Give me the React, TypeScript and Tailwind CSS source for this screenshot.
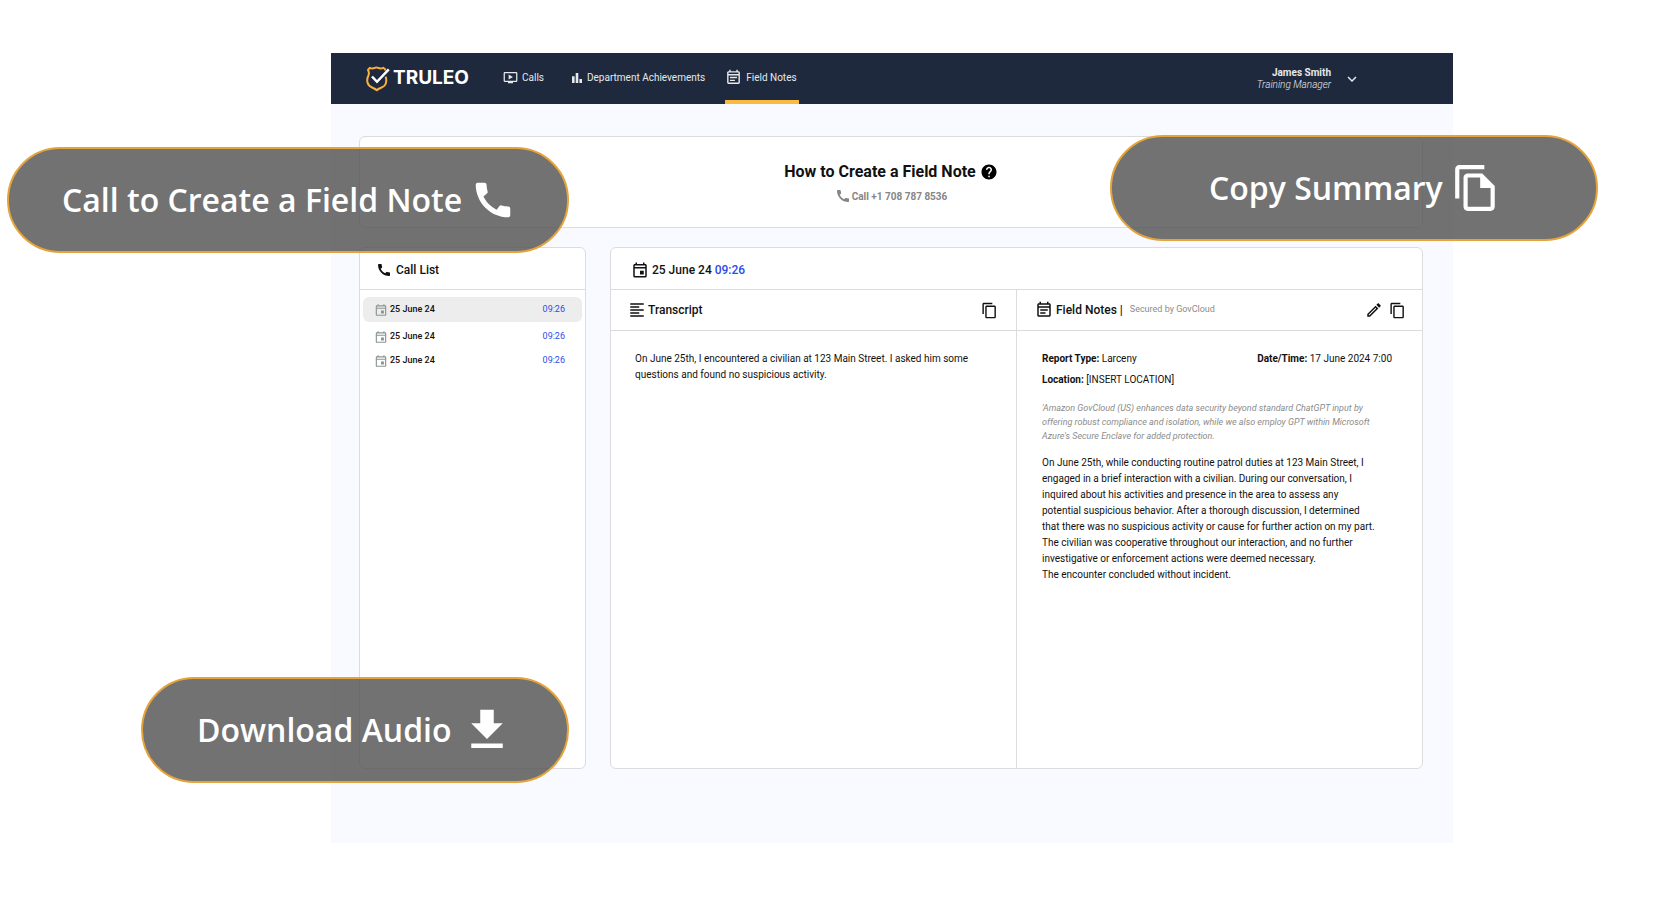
import React from "react";
import {
  MdCall,
  MdContentCopy,
  MdDownload,
  MdFormatAlignLeft,
  MdHelp,
  MdKeyboardArrowDown,
  MdOndemandVideo,
  MdOutlineEdit,
  MdOutlineEventNote,
  MdOutlineFileCopy,
  MdOutlineEvent,
} from "react-icons/md";

const BarsIcon = () => (
  <svg viewBox="0 0 10 10" className="w-[10px] h-[10px]" fill="currentColor">
    <path d="M0 3.2h2.6V10H0zM3.7 0h2.6v10H3.7zM7.4 6H10v4H7.4z" />
  </svg>
);

const Logo = () => (
  <a href="#" className="flex items-center gap-[3px] text-white">
    <svg viewBox="0 0 24 26" className="w-6 h-[26px]" fill="none">
      <path
        d="M19.2 4.600V3.200L17.200 1.800C15.500 2.700 13.800 2.700 12.300 1.900 11.200 1.400 9.800 1.400 8.700 1.900 7.200 2.700 5.500 2.700 3.800 1.800L2 3.900C3.200 6 3.300 7.500 2.400 9.500 1.200 12 1 14.500 1.500 16.600 2.200 19.400 4 20.800 6.500 21.700 8.300 22.400 9.700 23 10.800 24.200 11.900 23 13.300 22.400 15.100 21.700 17.600 20.800 19.400 19.400 20 16.600 20.400 14.800 20.300 12.600 19.600 10.700"
        stroke="#fbb03b"
        strokeWidth="2"
        strokeLinejoin="round"
      />
      <path d="M6 10.500l5 5.300L22.800 3.400" stroke="white" strokeWidth="2.500" />
    </svg>
    <span className="font-[Inter] text-[19px] font-bold">TRULEO</span>
  </a>
);

const calls = [
  { date: "25 June 24", time: "09:26", active: true },
  { date: "25 June 24", time: "09:26", active: false },
  { date: "25 June 24", time: "09:26", active: false },
];

const pill =
  "absolute flex items-center gap-2 h-[106px] rounded-full border-2 border-[#e5a43b] bg-[#555555]/83 text-white text-[32px] font-semibold font-['Open_Sans',sans-serif]";

const Header = () => (
  <header className="flex h-[51px] bg-[#1e293d] pl-[35px] pr-[92px] text-[#e6e8ec] text-[10px]">
    <Logo />
    <nav className="flex ml-[34px]">
      <a href="#" className="flex items-center gap-1 pb-[2px]">
        <MdOndemandVideo className="text-[15px]" />
        Calls
      </a>
      <a href="#" className="flex items-center gap-[5px] ml-7 pb-[2px]">
        <BarsIcon />
        Department Achievements
      </a>
      <a
        href="#"
        className="flex items-center gap-1 ml-5 pr-[2px] border-t-2 border-b-4 border-t-transparent border-b-[#fbb940]"
      >
        <MdOutlineEventNote className="text-[17px]" />
        Field Notes
      </a>
    </nav>
    <button className="flex items-center gap-3 ml-auto text-right leading-3">
      <span>
        <span className="block font-bold">James Smith</span>
        <span className="block italic font-light">Training Manager</span>
      </span>
      <MdKeyboardArrowDown className="text-lg" stroke="currentColor" />
    </button>
  </header>
);

const CallList = () => (
  <section className="w-[227px] shrink-0 rounded-md border border-[#dcdcdc] bg-white">
    <h2 className="flex items-center gap-1 h-[42px] pl-4 pt-[2px] border-b border-[#dcdcdc] text-xs font-medium">
      <MdCall className="text-base" />
      Call List
    </h2>
    <ul className="px-[3px] pt-[7px] text-[9px] font-medium">
      {calls.map((call, id) => (
        <li key={id} className={id === 0 ? "mb-[3px]" : ""}>
          <a
            href="#"
            className={
              call.active
                ? "flex items-center h-[25px] pl-[11px] pr-[17px] rounded-md bg-[#ededed]"
                : "flex items-center h-6 pl-[11px] pr-[17px]"
            }
          >
            <MdOutlineEvent className="text-sm text-[#8b9694] mr-[2px]" />
            {call.date}
            <span className="ml-auto font-normal text-[#2f4bea]">
              {call.time}
            </span>
          </a>
        </li>
      ))}
    </ul>
  </section>
);

const Transcript = () => (
  <section className="flex-1 border-r border-[#dcdcdc]">
    <div className="flex items-center h-[41px] pl-[17px] pr-[18px] border-b border-[#dcdcdc]">
      <MdFormatAlignLeft className="text-lg mr-[2px]" />
      <h2 className="text-xs font-medium">Transcript</h2>
      <button aria-label="Copy transcript" className="ml-auto">
        <MdContentCopy className="text-[17px]" />
      </button>
    </div>
    <p className="pl-6 pr-[46px] pt-5 text-[10px] leading-4">
      On June 25th, I encountered a civilian at 123 Main Street. I asked him
      some questions and found no suspicious activity.
    </p>
  </section>
);

const FieldNotes = () => (
  <section className="flex-1">
    <div className="flex items-center h-[41px] pl-[18px] pr-4 border-b border-[#dcdcdc]">
      <MdOutlineEventNote className="text-lg mr-[3px]" />
      <h2 className="text-xs font-medium">Field Notes |</h2>
      <span className="ml-[7px] text-[9px] text-[#8c8c8c]">
        Secured by GovCloud
      </span>
      <button aria-label="Edit note" className="ml-auto">
        <MdOutlineEdit className="text-lg" />
      </button>
      <button aria-label="Copy note" className="ml-[6px]">
        <MdContentCopy className="text-[17px]" />
      </button>
    </div>
    <div className="pl-[25px] pr-[30px] pt-5 text-[10px] leading-4">
      <div className="flex justify-between">
        <p>
          <b>Report Type:</b> Larceny
        </p>
        <p>
          <b>Date/Time:</b> 17 June 2024 7:00
        </p>
      </div>
      <p className="mt-[5px]">
        <b>Location:</b> [INSERT LOCATION]
      </p>
      <p className="mt-[13px] pr-4 text-[9px] leading-[14px] italic text-[#8c8c8c]">
        'Amazon GovCloud (US) enhances data security beyond standard ChatGPT
        input by offering robust compliance and isolation, while we also employ
        GPT within Microsoft Azure's Secure Enclave for added protection.
      </p>
      <p className="mt-3 pr-4">
        On June 25th, while conducting routine patrol duties at 123 Main
        Street, I engaged in a brief interaction with a civilian. During our
        conversation, I inquired about his activities and presence in the area
        to assess any potential suspicious behavior. After a thorough
        discussion, I determined that there was no suspicious activity or cause
        for further action on my part. The civilian was cooperative throughout
        our interaction, and no further investigative or enforcement actions
        were deemed necessary.
        <br />
        The encounter concluded without incident.
      </p>
    </div>
  </section>
);

const App = () => {
  return (
    <div className="relative pt-[53px] pb-[74px] pl-[331px] pr-[206px] bg-white text-[#111111] font-[Roboto,sans-serif]">
      <div className="bg-[#f9faff]">
        <Header />
        <main className="pt-8 pb-[74px] pl-7 pr-[30px]">
          <section className="flex flex-col items-center gap-1 h-[92px] pt-[23px] rounded-md border border-[#dcdcdc] bg-white">
            <h1 className="flex items-center gap-1 text-base leading-6 font-bold">
              How to Create a Field Note
              <MdHelp className="text-lg text-black" />
            </h1>
            <p className="flex items-center gap-px text-[10px] font-bold text-[#868686]">
              <MdCall className="text-base" />
              Call +1 708 787 8536
            </p>
          </section>
          <div className="flex gap-6 mt-[19px] min-h-[522px]">
            <CallList />
            <section className="flex flex-col flex-1 rounded-md border border-[#dcdcdc] bg-white">
              <h2 className="flex items-center h-[42px] pl-5 pt-[2px] border-b border-[#dcdcdc] text-xs font-medium">
                <MdOutlineEvent className="text-lg mr-[3px]" />
                25 June 24
                <span className="ml-[3px] text-[#2f4bea]">09:26</span>
              </h2>
              <div className="flex flex-1">
                <Transcript />
                <FieldNotes />
              </div>
            </section>
          </div>
        </main>
      </div>

      <button className={`${pill} left-[7px] top-[147px] w-[562px] pl-[53px]`}>
        Call to Create a Field Note
        <MdCall className="text-[46px]" />
      </button>
      <button className={`${pill} right-[61px] top-[135px] w-[488px] pl-[97px]`}>
        Copy Summary
        <MdOutlineFileCopy className="text-[50px]" />
      </button>
      <button className={`${pill} left-[141px] top-[677px] w-[428px] pl-[54px]`}>
        Download Audio
        <MdDownload className="text-[54px]" />
      </button>
    </div>
  );
};

export default App;
